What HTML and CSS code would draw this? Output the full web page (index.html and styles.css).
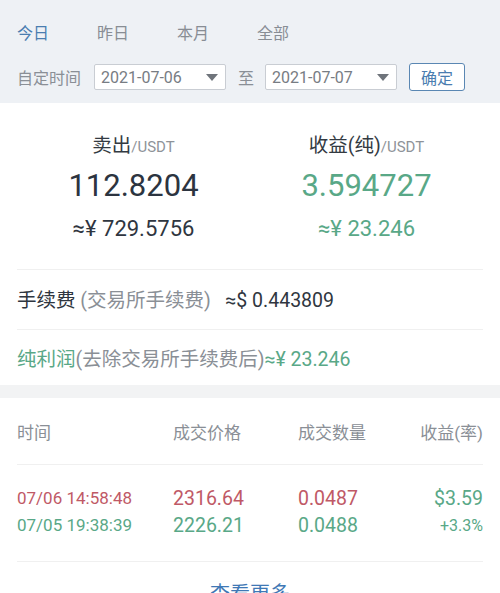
FILE: index.html
```html
<!DOCTYPE html>
<html>

<head>
    <meta charset="UTF-8">
    <title>收益统计</title>
    <link rel="stylesheet" href="styles.css">
</head>

<body>
    <div id="filter">
        <div class="tabs">
            <span class="tab active">今日</span>
            <span class="tab">昨日</span>
            <span class="tab">本月</span>
            <span class="tab">全部</span>
        </div>
        <div class="range">
            <span class="rangeLabel">自定时间</span>
            <div class="dateBox">
                <span>2021-07-06</span>
                <span class="caret"></span>
            </div>
            <span class="to">至</span>
            <div class="dateBox">
                <span>2021-07-07</span>
                <span class="caret"></span>
            </div>
            <button type="button" class="okBtn">确定</button>
        </div>
    </div>

    <div id="summary">
        <div class="totals">
            <div class="total">
                <div class="totalTitle">卖出<span class="unit">/USDT</span></div>
                <div class="totalValue">112.8204</div>
                <div class="totalCny">≈¥ 729.5756</div>
            </div>
            <div class="total green">
                <div class="totalTitle">收益(纯)<span class="unit">/USDT</span></div>
                <div class="totalValue">3.594727</div>
                <div class="totalCny">≈¥ 23.246</div>
            </div>
        </div>
        <div class="line">
            手续费 <span class="muted">(交易所手续费)</span>&nbsp;&nbsp; ≈$ 0.443809
        </div>
        <div class="line last">
            <span class="greenText">纯利润</span><span class="muted">(去除交易所手续费后)</span><span class="greenText">≈¥ 23.246</span>
        </div>
    </div>

    <div class="band"></div>

    <div id="trades">
        <div class="tradeHead">
            <span>时间</span>
            <span>成交价格</span>
            <span>成交数量</span>
            <span class="right">收益(率)</span>
        </div>
        <div class="tradeRow">
            <div class="col">
                <span class="time red">07/06 14:58:48</span>
                <span class="time green">07/05 19:38:39</span>
            </div>
            <div class="col">
                <span class="num red">2316.64</span>
                <span class="num green">2226.21</span>
            </div>
            <div class="col">
                <span class="num red">0.0487</span>
                <span class="num green">0.0488</span>
            </div>
            <div class="col right">
                <span class="num green">$3.59</span>
                <span class="rate green">+3.3%</span>
            </div>
        </div>
        <div class="more">查看更多</div>
    </div>
</body>

</html>
```

FILE: styles.css
```css
body {
    margin: 0;
    background-color: #ffffff;
    font-family: Roboto, "Noto Sans CJK SC", sans-serif;
    color: #2f3640;
}

#filter {
    box-sizing: border-box;
    height: 103px;
    background-color: #eef1f5;
    padding: 23px 17px 0;
}

.tabs {
    display: flex;
    gap: 48px;
    font-size: 16px;
    line-height: 22px;
    color: #888d94;
}

.tab.active {
    color: #4a7db0;
}

.range {
    display: flex;
    align-items: center;
    margin-top: 18px;
    font-size: 16px;
    color: #8a8f96;
}

.rangeLabel {
    margin-right: 13px;
}

.dateBox {
    display: flex;
    align-items: center;
    justify-content: space-between;
    box-sizing: border-box;
    width: 132px;
    height: 26px;
    padding: 0 6px 0 6px;
    background-color: #ffffff;
    border: 1px solid #c9cdd3;
    border-radius: 2px;
    color: #777c83;
    font-size: 16px;
}

.caret {
    width: 0;
    height: 0;
    border-left: 6px solid transparent;
    border-right: 6px solid transparent;
    border-top: 7px solid #6f747b;
    margin-right: 1px;
}

.to {
    margin: 0 11px 0 12px;
}

.okBtn {
    box-sizing: border-box;
    width: 56px;
    height: 28px;
    margin-left: 12px;
    padding: 0;
    background-color: #ffffff;
    border: 1px solid #5a87b3;
    border-radius: 3px;
    color: #4a7db0;
    font-family: Roboto, "Noto Sans CJK SC", sans-serif;
    font-size: 16px;
}

#summary {
    padding: 0 17px;
}

.totals {
    display: grid;
    grid-template-columns: 1fr 1fr;
    text-align: center;
    padding: 31px 0 26px;
    border-bottom: 1px solid #f0f0f0;
}

.totalTitle {
    font-size: 19.5px;
    line-height: 24px;
    color: #333a42;
}

.unit {
    font-size: 15px;
    color: #8e9399;
}

.totalValue {
    font-size: 31px;
    line-height: 36px;
    margin-top: 9px;
    color: #2c3440;
}

.totalCny {
    font-size: 22px;
    line-height: 28px;
    margin-top: 11px;
    color: #2f3640;
}

.total.green .totalValue,
.total.green .totalCny {
    color: #59a887;
}

.line {
    font-size: 19.5px;
    line-height: 24px;
    padding: 19px 0 16px;
    border-bottom: 1px solid #f0f0f0;
    color: #2f3640;
}

.line.last {
    border-bottom: none;
    padding: 18px 0 13px;
}

.muted {
    color: #8a8f96;
}

.greenText {
    color: #59a887;
}

.band {
    height: 13px;
    background-color: #f2f3f4;
}

#trades {
    padding: 0 17px;
}

.tradeHead {
    display: grid;
    grid-template-columns: 156px 125px 1fr 1fr;
    font-size: 17px;
    line-height: 24px;
    color: #8a8f96;
    padding: 23px 0 19px;
    border-bottom: 1px solid #f0f0f0;
}

.right {
    text-align: right;
}

.tradeRow {
    display: grid;
    grid-template-columns: 156px 125px 1fr 1fr;
    align-items: center;
    padding: 20px 0 22px;
    border-bottom: 1px solid #f0f0f0;
}

.col {
    display: flex;
    flex-direction: column;
}

.col.right {
    align-items: flex-end;
}

.time {
    font-size: 17px;
    line-height: 27px;
}

.num {
    font-size: 19.5px;
    line-height: 27px;
}

.rate {
    font-size: 16px;
    line-height: 27px;
}

.red {
    color: #bf5966;
}

.green {
    color: #59a887;
}

.more {
    text-align: center;
    font-size: 20px;
    color: #3f78b5;
    padding-top: 16px;
}
```
